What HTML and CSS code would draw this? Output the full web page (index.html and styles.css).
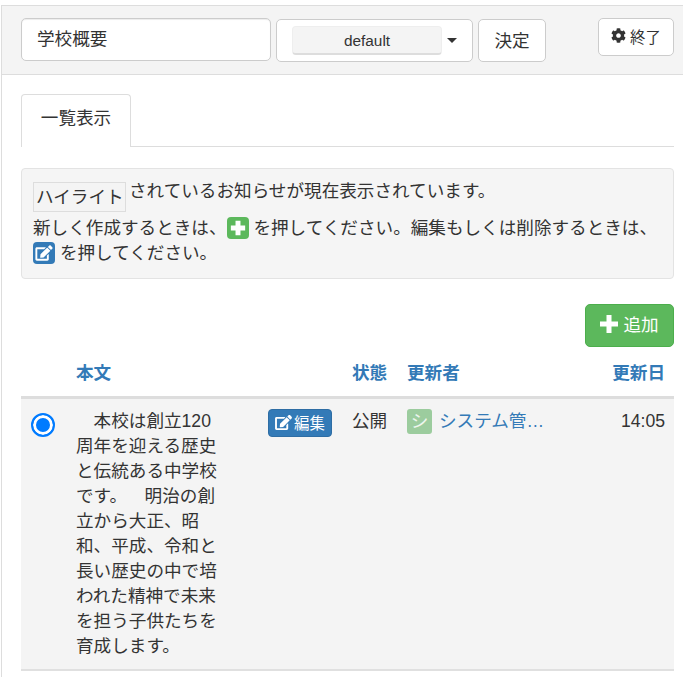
FILE: index.html
```html
<!DOCTYPE html>
<html lang="ja">
<head>
<meta charset="utf-8">
<title>学校概要</title>
<link rel="stylesheet" href="styles.css">
</head>
<body>
<div class="panel">
  <header class="head">
    <input class="title-input" type="text" value="学校概要">
    <div class="select-box">
      <span class="select-inner">default</span>
      <span class="caret"></span>
    </div>
    <button class="btn decide">決定</button>
    <button class="btn finish">
      <svg class="gear" viewBox="0 0 512 512"><path d="M487.4 315.7l-42.6-24.6c4.3-23.2 4.3-47 0-70.2l42.6-24.6c4.9-2.8 7.1-8.6 5.5-14-11.1-35.6-30-67.8-54.7-94.6-3.8-4.1-10-5.1-14.8-2.3L380.8 110c-17.9-15.4-38.5-27.3-60.8-35.1V25.8c0-5.6-3.9-10.5-9.4-11.7-36.7-8.2-74.3-7.8-109.2 0-5.5 1.2-9.4 6.1-9.4 11.7V75c-22.2 7.9-42.8 19.8-60.8 35.1L88.7 85.5c-4.9-2.8-11-1.9-14.8 2.3-24.7 26.7-43.6 58.9-54.7 94.6-1.7 5.4.6 11.2 5.5 14L67.3 221c-4.3 23.2-4.3 47 0 70.2l-42.6 24.6c-4.9 2.8-7.1 8.6-5.5 14 11.1 35.6 30 67.8 54.7 94.6 3.8 4.1 10 5.1 14.8 2.3l42.6-24.6c17.9 15.4 38.5 27.3 60.8 35.1v49.2c0 5.6 3.9 10.5 9.4 11.7 36.7 8.2 74.3 7.8 109.2 0 5.5-1.2 9.4-6.1 9.4-11.7v-49.2c22.2-7.9 42.8-19.8 60.8-35.1l42.6 24.6c4.9 2.8 11 1.9 14.8-2.3 24.7-26.7 43.6-58.9 54.7-94.6 1.5-5.5-.7-11.3-5.6-14.1zM256 336c-44.1 0-80-35.9-80-80s35.9-80 80-80 80 35.9 80 80-35.9 80-80 80z"/></svg>終了
    </button>
  </header>
  <main class="body">
    <nav class="tabs"><a class="tab">一覧表示</a></nav>
    <section class="well">
      <p class="well-line first"><span class="hl">ハイライト</span>されているお知らせが現在表示されています。</p>
      <p class="well-line">新しく作成するときは、<span class="mini green"><svg viewBox="0 0 20 20"><path class="plus" d="M10 3.5v13M3.5 10h13"/></svg></span> を押してください。編集もしくは削除するときは、<span class="mini blue"><svg class="edit-icon" viewBox="-80 -70 736 652"><path d="M402.6 83.2l90.2 90.2c3.8 3.8 3.8 10 0 13.8L274.4 405.6l-92.8 10.3c-12.4 1.4-22.9-9.1-21.5-21.5l10.3-92.8L388.8 83.2c3.8-3.8 10-3.8 13.8 0zm162-22.9l-48.8-48.8c-15.2-15.2-39.9-15.2-55.2 0l-35.4 35.4c-3.8 3.8-3.8 10 0 13.8l90.2 90.2c3.8 3.8 10 3.8 13.8 0l35.4-35.4c15.2-15.3 15.2-40 0-55.2zM384 346.2V448H64V128h229.8c3.2 0 6.2-1.3 8.5-3.5l40-40c7.6-7.6 2.2-20.5-8.5-20.5H48C21.5 64 0 85.5 0 112v352c0 26.5 21.5 48 48 48h352c26.5 0 48-21.5 48-48V306.2c0-10.7-12.9-16-20.5-8.5l-40 40c-2.2 2.3-3.5 5.3-3.5 8.5z"/></svg></span> を押してください。</p>
    </section>
    <div class="actions">
      <button class="add"><svg viewBox="0 0 18 18"><path class="plus-big" d="M9 0v18M0 9h18"/></svg>追加</button>
    </div>
    <table class="list">
      <colgroup>
        <col class="c-radio"><col class="c-text"><col class="c-edit"><col class="c-state"><col class="c-user"><col class="c-date">
      </colgroup>
      <thead>
        <tr><th></th><th>本文</th><th></th><th class="nowrap">状態</th><th>更新者</th><th class="right">更新日</th></tr>
      </thead>
      <tbody>
        <tr>
          <td class="radio-cell"><input class="radio" type="radio" checked></td>
          <td class="message">　本校は創立120周年を迎える歴史と伝統ある中学校です。　明治の創立から大正、昭和、平成、令和と長い歴史の中で培われた精神で未来を担う子供たちを育成します。</td>
          <td class="right"><button class="edit"><svg class="edit-icon" viewBox="0 0 576 512"><path d="M402.6 83.2l90.2 90.2c3.8 3.8 3.8 10 0 13.8L274.4 405.6l-92.8 10.3c-12.4 1.4-22.9-9.1-21.5-21.5l10.3-92.8L388.8 83.2c3.8-3.8 10-3.8 13.8 0zm162-22.9l-48.8-48.8c-15.2-15.2-39.9-15.2-55.2 0l-35.4 35.4c-3.8 3.8-3.8 10 0 13.8l90.2 90.2c3.8 3.8 10 3.8 13.8 0l35.4-35.4c15.2-15.3 15.2-40 0-55.2zM384 346.2V448H64V128h229.8c3.2 0 6.2-1.3 8.5-3.5l40-40c7.6-7.6 2.2-20.5-8.5-20.5H48C21.5 64 0 85.5 0 112v352c0 26.5 21.5 48 48 48h352c26.5 0 48-21.5 48-48V306.2c0-10.7-12.9-16-20.5-8.5l-40 40c-2.2 2.3-3.5 5.3-3.5 8.5z"/></svg>編集</button></td>
          <td class="nowrap">公開</td>
          <td><div class="user"><span class="avatar">シ</span><a class="user-name">システム管…</a></div></td>
          <td class="right">14:05</td>
        </tr>
      </tbody>
    </table>
  </main>
</div>
</body>
</html>
```
FILE: styles.css
```css
* { box-sizing: border-box; }
html, body { margin: 0; padding: 0; background: #fff; }
body {
  padding: 5px 0 0 1px;
  font-family: "Liberation Sans", "Noto Sans CJK JP", sans-serif;
  font-size: 17.6px;
  line-height: 25px;
  color: #333;
  overflow: hidden;
  height: 677px;
}
button, input { font-family: inherit; color: #333; }
.panel { height: 672px; border: 1px solid #ddd; border-width: 1px 0 0 1px; width: 682px; }
.head {
  display: flex;
  align-items: flex-start;
  height: 69px;
  background: #f4f4f4;
  border-bottom: 1px solid #ddd;
  padding: 12px 9px 0 19px;
}
.title-input {
  width: 250px;
  height: 43px;
  padding: 0 0 4px 15px;
  font-size: 17.6px;
  background: #fff;
  border: 1px solid #ccc;
  border-radius: 5px;
  box-shadow: inset 0 1px 1px rgba(0,0,0,.075);
}
.select-box {
  display: flex;
  align-items: center;
  width: 197px;
  height: 43px;
  margin: 1px 0 0 5px;
  padding-left: 15px;
  background: #fff;
  border: 1px solid #ccc;
  border-radius: 5px;
}
.select-inner {
  width: 150px;
  height: 29px;
  line-height: 27px;
  text-align: center;
  font-size: 15.4px;
  background: #f4f4f4;
  border-radius: 4px;
  border: 1px solid #eee;
  border-bottom: 2px solid #ddd;
}
.caret {
  margin-left: 5px;
  border-top: 5px solid #333;
  border-left: 5px solid transparent;
  border-right: 5px solid transparent;
}
.btn {
  background: #fff;
  border: 1px solid #ccc;
  border-radius: 5px;
  font-size: 17.6px;
  padding: 0 0 3px;
}
.decide { width: 68px; height: 43px; margin: 1px 0 0 5px; }
.finish {
  display: flex;
  align-items: center;
  justify-content: center;
  width: 76px;
  height: 38px;
  margin-left: auto;
  font-size: 15.4px;
}
.gear { width: 15px; height: 15px; margin-right: 4px; fill: #333; }
.body { padding: 19px 9px 0 19px; }
.tabs { height: 53px; border-bottom: 1px solid #ddd; }
.tab {
  display: block;
  width: 110px;
  height: 53px;
  padding-top: 11px;
  text-align: center;
  background: #fff;
  border: 1px solid #ddd;
  border-bottom: 0;
  border-radius: 4px 4px 0 0;
}
.well {
  margin-top: 21px;
  height: 111px;
  padding: 10px 11px 0;
  background: #f5f5f5;
  border: 1px solid #e3e3e3;
  border-radius: 4px;
}
.well-line { margin: 0; }
.well-line.first { height: 37px; }
.hl {
  display: inline-block;
  height: 30px;
  padding: 2px 0 0 2px;
  width: 93px;
  margin: 3px 3px 0 0;
  border: 1px solid #ddd;
  background: #f4f4f4;
  vertical-align: top;
}
.mini {
  display: inline-block;
  width: 22px;
  height: 22px;
  border-radius: 4px;
  vertical-align: -5px;
}
.mini svg { display: block; width: 22px; height: 22px; }
.green { background: #5cb85c; }
.blue { background: #337ab7; }
.plus { fill: none; stroke: #fff; stroke-width: 4.5; }
.plus-big { fill: none; stroke: #fff; stroke-width: 5; }
.edit-icon { fill: #fff; }
.actions { display: flex; justify-content: flex-end; margin-top: 25px; }
.add {
  display: flex;
  align-items: center;
  justify-content: center;
  width: 89px;
  height: 43px;
  padding: 0 0 4px;
  font-size: 17.6px;
  color: #fff;
  background: #5cb85c;
  border: 1px solid #4cae4c;
  border-radius: 5px;
}
.add svg { width: 18px; height: 18px; margin-right: 5px; }
.list { width: 653px; table-layout: fixed; border-collapse: collapse; margin-top: 0; }
.c-radio { width: 45px; }
.c-text { width: 162px; }
.c-edit { width: 114px; }
.c-state { width: 55px; }
.c-user { width: 168px; }
.c-date { width: 109px; }
th {
  height: 50px;
  padding: 14px 10px 10px;
  text-align: left;
  font-weight: 700;
  color: #337ab7;
  border-bottom: 3px solid #ddd;
  white-space: nowrap;
}
td {
  padding: 10px;
  vertical-align: top;
  background: #f4f4f4;
  border-bottom: 2px solid #e0e0e0;
  white-space: normal;
}
th:last-child, td:last-child { padding-right: 9px; }
th.right, td.right { text-align: right; }
.nowrap { white-space: nowrap; }
.message { text-spacing-trim: space-all; }
.radio-cell { padding: 0 0 0 10px; }
.radio {
  appearance: none;
  display: block;
  width: 24px;
  height: 24px;
  margin: 14px 0 0;
  background: #007bff;
  border: 2px solid #007bff;
  border-radius: 50%;
  box-shadow: inset 0 0 0 3px #fff;
}
.edit {
  display: inline-flex;
  align-items: center;
  width: 64px;
  height: 28px;
  padding: 0 0 2px 6px;
  font-size: 15.4px;
  color: #fff;
  background: #337ab7;
  border: 1px solid #2e6da4;
  border-radius: 4px;
}
.edit svg { width: 17px; height: 15px; margin-right: 2px; }
.user { display: flex; align-items: flex-start; }
.avatar {
  flex: none;
  width: 25px;
  height: 25px;
  border-radius: 3px;
  text-align: center;
  color: #eef6ee;
  font-size: 17.6px;
  background: #9ccc9e;
}
.user-name { margin-left: 7px; color: #337ab7; white-space: nowrap; }
```
